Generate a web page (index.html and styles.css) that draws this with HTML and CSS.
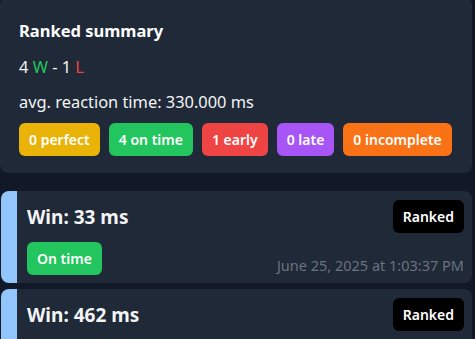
FILE: index.html
```html
<!DOCTYPE html>
<html>
<head>
<meta charset="utf-8">
<link rel="stylesheet" href="styles.css">
</head>
<body>
<div class="page">
  <section class="summary">
    <h2 class="summary-title">Ranked summary</h2>
    <div class="record">4 <span class="win">W</span> - 1 <span class="loss">L</span></div>
    <div class="avg">avg. reaction time: 330.000 ms</div>
    <div class="badges">
      <span class="badge perfect">0 perfect</span>
      <span class="badge ontime">4 on time</span>
      <span class="badge early">1 early</span>
      <span class="badge late">0 late</span>
      <span class="badge incomplete">0 incomplete</span>
    </div>
  </section>

  <article class="game">
    <div class="game-row">
      <h3 class="game-title">Win: 33 ms</h3>
      <span class="badge ranked">Ranked</span>
    </div>
    <div class="game-row bottom">
      <span class="badge ontime">On time</span>
      <span class="date">June 25, 2025 at 1:03:37 PM</span>
    </div>
  </article>

  <article class="game">
    <div class="game-row">
      <h3 class="game-title">Win: 462 ms</h3>
      <span class="badge ranked">Ranked</span>
    </div>
    <div class="game-row bottom">
      <span class="badge ontime">On time</span>
      <span class="date">June 25, 2025 at 1:03:30 PM</span>
    </div>
  </article>
</div>
</body>
</html>
```
FILE: styles.css
```css
html, body {
  margin: 0;
  padding: 0;
  background: #111827;
  overflow: hidden;
  height: 339px;
}
body {
  font-family: "Noto Sans", "Open Sans", sans-serif;
  color: #f3f4f6;
}
.page {
  width: 472px;
  margin-top: -3px;
  display: flex;
  flex-direction: column;
  gap: 6px;
}
.summary {
  background: #1f2937;
  border-radius: 8px;
  padding: 22px 19px 17px 19px;
  margin-bottom: 12px;
}
.summary-title {
  margin: 0;
  font-size: 16.5px;
  font-weight: 700;
  line-height: 24px;
  color: #ffffff;
}
.record {
  margin-top: 13px;
  font-size: 16.4px;
  line-height: 22px;
}
.win { color: #22c55e; }
.loss { color: #ef4444; }
.avg {
  margin-top: 13px;
  font-size: 16.4px;
  line-height: 22px;
}
.badges {
  margin-top: 10px;
  display: flex;
  gap: 9px;
}
.badge {
  display: inline-flex;
  align-items: center;
  flex-shrink: 0;
  white-space: nowrap;
  height: 33px;
  padding: 0 10px;
  border-radius: 6px;
  font-size: 14px;
  font-weight: 600;
  color: #ffffff;
  box-sizing: border-box;
}
.perfect { background: #eab308; }
.ontime { background: #22c55e; }
.early { background: #ef4444; }
.late { background: #a855f7; }
.incomplete { background: #f97316; }
.ranked { background: #000000; }

.game {
  flex-shrink: 0;
  margin-left: 1px;
  background: #1f2937;
  border-left: 16px solid #93c5fd;
  border-radius: 8px;
  padding: 9px 8px 8px 10px;
}
.game-row {
  display: flex;
  justify-content: space-between;
  align-items: center;
}
.game-row.bottom {
  margin-top: 9px;
  align-items: flex-end;
}
.game-title {
  margin: 0;
  font-size: 19px;
  font-weight: 700;
  line-height: 24px;
}
.date {
  font-size: 14.5px;
  color: #6b7280;
  line-height: 20px;
}
```
